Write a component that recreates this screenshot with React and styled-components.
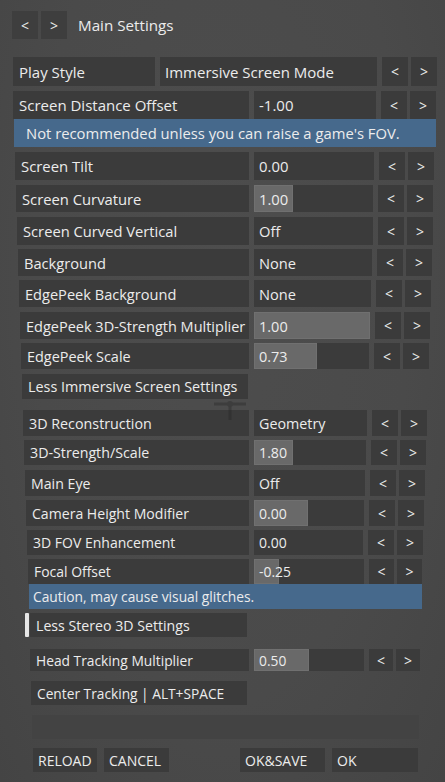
import React from "react";
import styled, { createGlobalStyle } from "styled-components";

const GlobalStyle = createGlobalStyle`
  html, body {
    margin: 0;
    padding: 0;
    background: #474747;
  }
  body {
    font-family: "Open Sans", "Noto Sans", sans-serif;
    color: #ececec;
  }
`;

const Screen = styled.div`
  width: 445px;
  height: 782px;
  overflow: hidden;
  position: relative;
  background: radial-gradient(ellipse at 50% 35%, #4d4d4d 0%, #4a4a4a 60%, #444444 100%);
  font-size: 14px;
`;

const Header = styled.div`
  display: flex;
  align-items: center;
  gap: 3px;
  padding: 11px 0 0 12px;
  height: 28px;
`;

const NavBtn = styled.div`
  width: 26px;
  height: 28px;
  background: #3e3e3e;
  display: flex;
  align-items: center;
  justify-content: center;
  font-size: 14px;
`;

const Title = styled.div`
  margin-left: 8px;
  font-size: 15.2px;
`;

const List = styled.div`
  display: flex;
  flex-direction: column;
  margin-top: 18px;
`;

// the screenshot is slightly skewed: rows further down sit a little inward and get smaller text
const sizeFor = (l) => (15 - (l - 13) * 0.07).toFixed(2);

const Row = styled.div`
  display: flex;
  height: ${({ $h }) => $h || 28}px;
  margin-top: ${({ $mt }) => $mt ?? 4}px;
  padding-left: ${({ $l }) => $l}px;
  padding-right: ${({ $r }) => $r}px;
  font-size: ${({ $l }) => sizeFor($l)}px;
  gap: 5px;
`;

const Cell = styled.div`
  background: #3b3b3b;
  display: flex;
  align-items: center;
  padding-left: 6px;
  box-sizing: border-box;
  white-space: nowrap;
`;

const Label = styled(Cell)`
  width: ${({ $w }) => $w}px;
  flex: none;
`;

const Value = styled(Cell)`
  flex: 1;
  position: relative;
  padding-left: 5px;
`;

const Fill = styled.div`
  position: absolute;
  left: 0;
  top: 0;
  bottom: 0;
  background: #696969;
  box-shadow: inset 0 0 0 1px #707070;
`;

const ValueText = styled.span`
  position: relative;
`;

const Arrows = styled.div`
  display: flex;
  gap: 3px;
  font-size: 14px;
`;

const Arrow = styled.div`
  width: ${({ $w }) => $w || 26}px;
  background: #3b3b3b;
  display: flex;
  align-items: center;
  justify-content: center;
`;

const Banner = styled.div`
  height: ${({ $h }) => $h}px;
  margin-left: ${({ $l }) => $l}px;
  margin-right: ${({ $r }) => $r}px;
  background: #46698c;
  display: flex;
  align-items: center;
  padding-left: ${({ $pl }) => $pl}px;
  font-size: ${({ $fs }) => $fs}px;
  white-space: nowrap;
`;

const Section = styled.div`
  height: ${({ $h }) => $h}px;
  margin-top: ${({ $mt }) => $mt}px;
  margin-left: ${({ $l }) => $l}px;
  width: ${({ $w }) => $w}px;
  font-size: ${({ $l }) => sizeFor($l)}px;
  display: flex;
`;

const Marker = styled.div`
  width: 4px;
  background: #e6e6e6;
  border-radius: 1px;
  margin-right: 1px;
`;

const SectionCell = styled(Cell)`
  flex: 1;
`;

const EmptyBar = styled.div`
  height: 24px;
  margin-top: 10px;
  margin-left: 32px;
  margin-right: 26px;
  background: #434343;
`;

const Footer = styled.div`
  display: flex;
  height: 24px;
  margin-top: 9px;
  padding-left: 33px;
  padding-right: 27px;
  gap: 7px;
`;

const FootBtn = styled(Cell)`
  width: ${({ $w }) => $w}px;
  margin-left: ${({ $ml }) => $ml || 0}px;
  font-size: 14px;
  padding-left: 5px;
`;

const Crosshair = styled.svg`
  position: absolute;
  left: 214px;
  top: 396px;
  opacity: 0.35;
`;

const Setting = ({ label, value, fill, l, r, mt, h, bw, lw }) => (
  <Row $l={l} $r={r} $mt={mt} $h={h}>
    <Label $w={lw ?? 249 - l}>{label}</Label>
    <Value>
      {fill != null && <Fill style={{ width: `${fill}%` }} />}
      <ValueText>{value}</ValueText>
    </Value>
    <Arrows>
      <Arrow $w={bw}>&lt;</Arrow>
      <Arrow $w={bw}>&gt;</Arrow>
    </Arrows>
  </Row>
);

export default function App() {
  return (
    <Screen>
      <GlobalStyle />
      <Crosshair width="32" height="24" viewBox="0 0 32 24">
        <path d="M0 8 H32 M16 8 V24" stroke="#222" strokeWidth="3" fill="none" />
        <circle cx="16" cy="8" r="3" fill="#222" />
      </Crosshair>
      <Header>
        <NavBtn>&lt;</NavBtn>
        <NavBtn>&gt;</NavBtn>
        <Title>Main Settings</Title>
      </Header>
      <List>
        <Setting label="Play Style" value="Immersive Screen Mode" l={13} r={8} h={29} mt={0} lw={142} />
        <Setting label="Screen Distance Offset" value="-1.00" l={13} r={9} mt={5} />
        <Banner $h={28} $l={14} $r={9} $pl={12} $fs={14.8}>
          Not recommended unless you can raise a game's FOV.
        </Banner>
        <Setting label="Screen Tilt" value="0.00" l={15} r={11} mt={5} />
        <Setting label="Screen Curvature" value="1.00" fill={33} l={16} r={12} mt={5} h={27} />
        <Setting label="Screen Curved Vertical" value="Off" l={17} r={12} mt={5} />
        <Setting label="Background" value="None" l={18} r={13} h={27} />
        <Setting label="EdgePeek Background" value="None" l={19} r={14} h={27} />
        <Setting label="EdgePeek 3D-Strength Multiplier" value="1.00" fill={100} l={20} r={15} mt={5} h={27} lw={229} />
        <Setting label="EdgePeek Scale" value="0.73" fill={55} l={21} r={16} h={26} />
        <Section $h={25} $mt={5} $l={22} $w={226}>
          <SectionCell>Less Immersive Screen Settings</SectionCell>
        </Section>
        <Setting label="3D Reconstruction" value="Geometry" l={23} r={18} mt={11} h={26} />
        <Setting label="3D-Strength/Scale" value="1.80" fill={35} l={24} r={19} h={25} />
        <Setting label="Main Eye" value="Off" l={25} r={20} mt={5} h={26} />
        <Setting label="Camera Height Modifier" value="0.00" fill={49} l={26} r={21} h={26} />
        <Setting label="3D FOV Enhancement" value="0.00" l={27} r={22} h={25} />
        <Setting label="Focal Offset" value="-0.25" fill={23} l={28} r={23} h={25} bw={25} />
        <Banner $h={25} $l={29} $r={23} $pl={4} $fs={13.8}>
          Caution, may cause visual glitches.
        </Banner>
        <Section $h={24} $mt={4} $l={25} $w={222}>
          <Marker />
          <SectionCell>Less Stereo 3D Settings</SectionCell>
        </Section>
        <Setting label="Head Tracking Multiplier" value="0.50" fill={50} l={30} r={25} mt={12} h={22} bw={24} />
        <Section $h={24} $mt={10} $l={31} $w={216}>
          <SectionCell>Center Tracking | ALT+SPACE</SectionCell>
        </Section>
        <EmptyBar />
        <Footer>
          <FootBtn $w={64}>RELOAD</FootBtn>
          <FootBtn $w={65}>CANCEL</FootBtn>
          <FootBtn $w={85} $ml={64}>OK&amp;SAVE</FootBtn>
          <FootBtn $w={86}>OK</FootBtn>
        </Footer>
      </List>
    </Screen>
  );
}
